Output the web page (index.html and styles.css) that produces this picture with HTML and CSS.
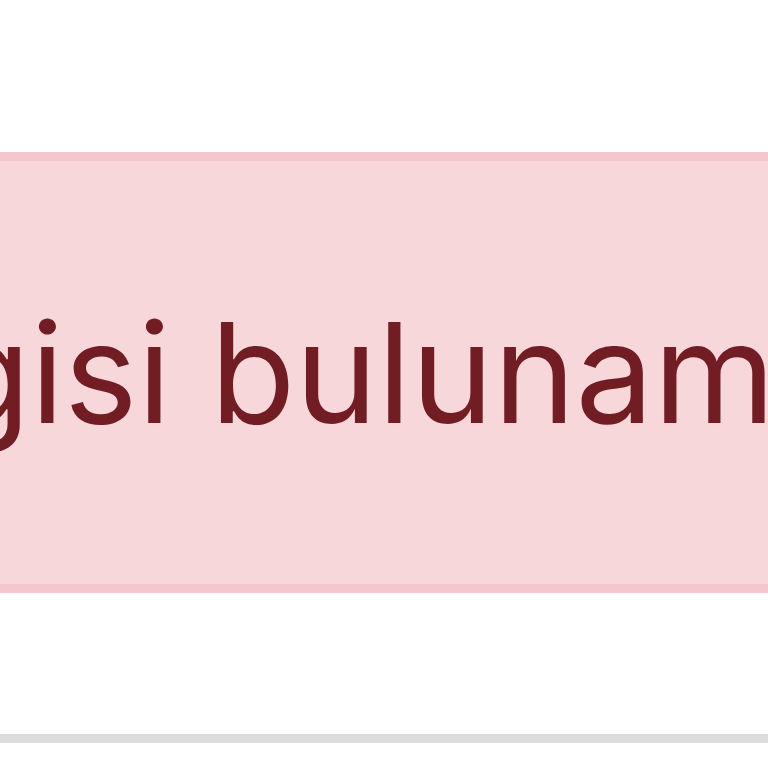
FILE: index.html
```html
<!DOCTYPE html>
<html lang="tr">
<head>
<meta charset="utf-8">
<link rel="stylesheet" href="styles.css">
</head>
<body>
<div class="page">
  <div class="alert">Kayıt bilgisi bulunamadı.</div>
  <div class="rule"></div>
</div>
</body>
</html>
```
FILE: styles.css
```css
html, body {
  margin: 0;
  padding: 0;
  background: #ffffff;
  overflow: hidden;
}
.page {
  width: 768px;
  height: 768px;
  overflow: hidden;
  padding-top: 152px;
  box-sizing: border-box;
}
.alert {
  margin-left: -758px;
  width: 2400px;
  box-sizing: border-box;
  background: #f8d7da;
  border: 9px solid #f5c6cb;
  color: #721c24;
  font-family: Inter, "Noto Sans", sans-serif;
  font-size: 139px;
  line-height: 211px;
  padding: 106px 176px;
  white-space: nowrap;
}
.rule {
  margin-top: 141px;
  height: 9px;
  background: #dcdcdc;
}
```
